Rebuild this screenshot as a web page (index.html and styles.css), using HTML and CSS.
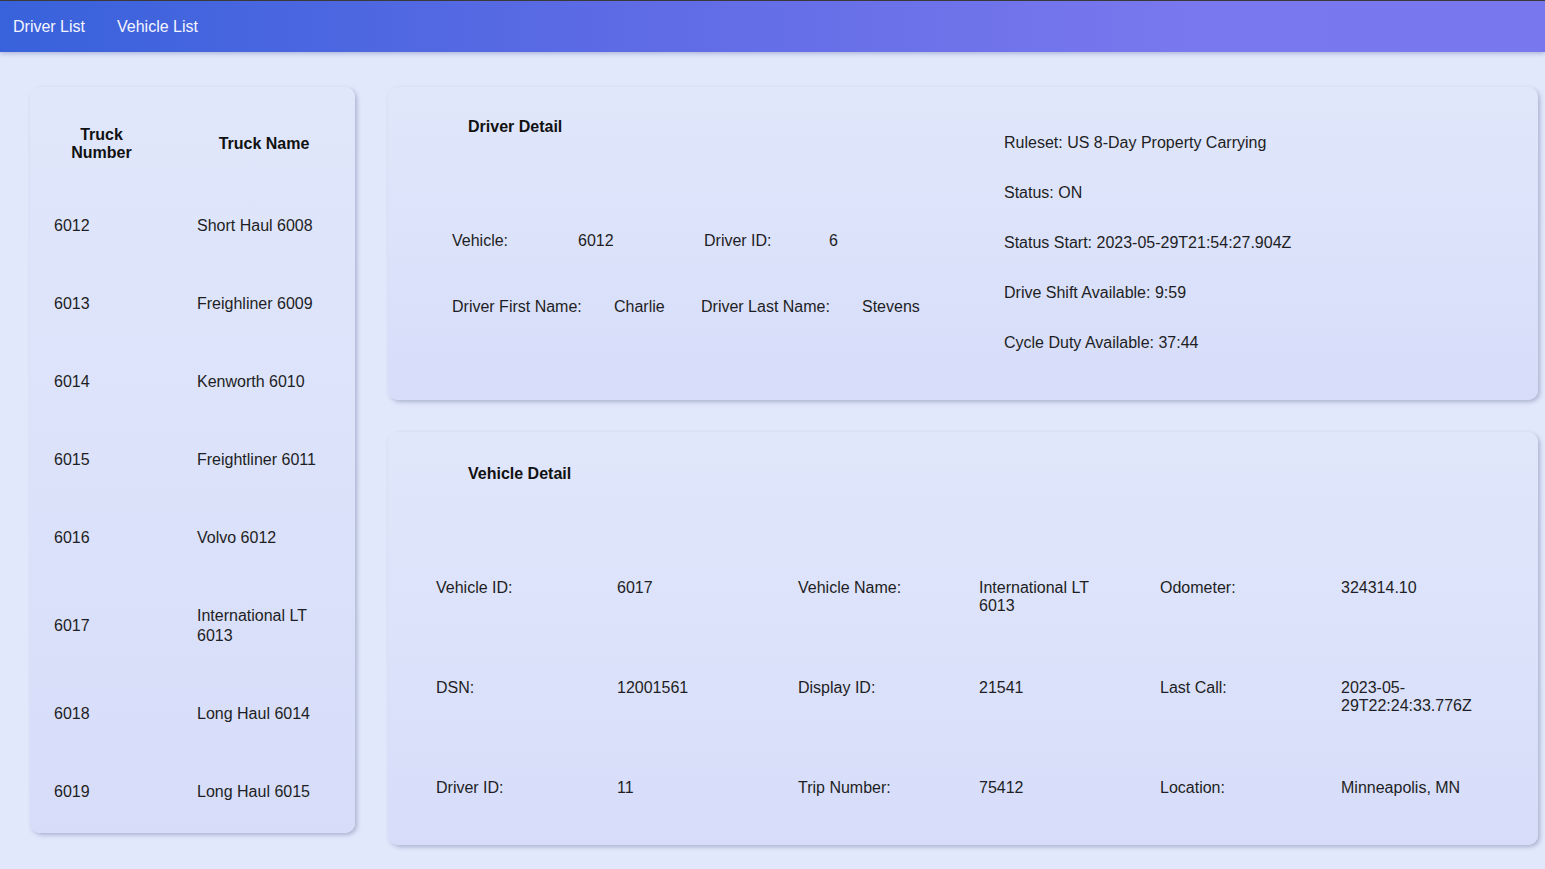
FILE: index.html
```html
<!DOCTYPE html>
<html>
<head>
    <title>Fleet Dashboard</title>
    <link rel="stylesheet" href="styles.css">
</head>
<body>
    <nav class="navbar">
        <a href="#" class="nav-link">Driver List</a>
        <a href="#" class="nav-link">Vehicle List</a>
    </nav>

    <main class="dashboard">
        <section class="card truck-card">
            <table class="truck-table">
                <colgroup>
                    <col class="col-number">
                    <col>
                </colgroup>
                <thead>
                    <tr>
                        <th>Truck Number</th>
                        <th>Truck Name</th>
                    </tr>
                </thead>
                <tbody>
                    <tr><td>6012</td><td>Short Haul 6008</td></tr>
                    <tr><td>6013</td><td>Freighliner 6009</td></tr>
                    <tr><td>6014</td><td>Kenworth 6010</td></tr>
                    <tr><td>6015</td><td>Freightliner 6011</td></tr>
                    <tr><td>6016</td><td>Volvo 6012</td></tr>
                    <tr><td>6017</td><td>International LT 6013</td></tr>
                    <tr><td>6018</td><td>Long Haul 6014</td></tr>
                    <tr><td>6019</td><td>Long Haul 6015</td></tr>
                </tbody>
            </table>
        </section>

        <div class="detail-column">
            <section class="card driver-card">
                <div class="driver-main">
                    <h3 class="card-title">Driver Detail</h3>
                    <div class="dd-row dd-ids">
                        <span>Vehicle:</span>
                        <span>6012</span>
                        <span>Driver ID:</span>
                        <span>6</span>
                    </div>
                    <div class="dd-row dd-names">
                        <span>Driver First Name:</span>
                        <span>Charlie</span>
                        <span>Driver Last Name:</span>
                        <span>Stevens</span>
                    </div>
                </div>
                <div class="driver-status">
                    <p>Ruleset: US 8-Day Property Carrying</p>
                    <p>Status: ON</p>
                    <p>Status Start: 2023-05-29T21:54:27.904Z</p>
                    <p>Drive Shift Available: 9:59</p>
                    <p>Cycle Duty Available: 37:44</p>
                </div>
            </section>

            <section class="card vehicle-card">
                <h3 class="card-title">Vehicle Detail</h3>
                <div class="vehicle-grid">
                    <div class="cell">Vehicle ID:</div>
                    <div class="cell">6017</div>
                    <div class="cell">Vehicle Name:</div>
                    <div class="cell">International LT 6013</div>
                    <div class="cell">Odometer:</div>
                    <div class="cell">324314.10</div>

                    <div class="cell">DSN:</div>
                    <div class="cell">12001561</div>
                    <div class="cell">Display ID:</div>
                    <div class="cell">21541</div>
                    <div class="cell">Last Call:</div>
                    <div class="cell">2023-05-29T22:24:33.776Z</div>

                    <div class="cell">Driver ID:</div>
                    <div class="cell">11</div>
                    <div class="cell">Trip Number:</div>
                    <div class="cell">75412</div>
                    <div class="cell">Location:</div>
                    <div class="cell">Minneapolis, MN</div>
                </div>
            </section>
        </div>
    </main>
</body>
</html>
```

FILE: styles.css
```css
body {
    margin: 0;
    font-family: "Liberation Sans", Arial, sans-serif;
    font-size: 16px;
    color: #1e1e24;
    background-color: #e1e8fc;
    min-height: 869px;
}

/* --- Barra de navegação --- */
.navbar {
    height: 51px;
    border-top: 1px solid #3a3a3a;
    background: linear-gradient(to right, #3862db 0%, #5d6be5 40%, #7a78ee 78%, #7877ed 100%);
    box-shadow: 0 2px 4px rgba(40, 50, 120, 0.25);
    display: flex;
    align-items: center;
    padding-left: 13px;
    gap: 32px;
}

.nav-link {
    color: #f4f5ff;
    text-decoration: none;
}

/* --- Layout principal --- */
.dashboard {
    display: flex;
    align-items: flex-start;
    gap: 33px;
    padding: 35px 7px 0 30px;
}

.card {
    background: linear-gradient(to bottom, #e0e7fb, #d7ddf9);
    border-radius: 10px;
    box-shadow: 2px 2px 4px rgba(70, 80, 130, 0.35);
}

.card-title {
    margin: 0;
    font-size: 16px;
    font-weight: bold;
    color: #111;
}

/* --- Tabela de caminhões --- */
.truck-card {
    width: 325px;
    flex-shrink: 0;
    padding: 15px 0 2px 0;
}

.truck-table {
    width: 100%;
    table-layout: fixed;
    border-collapse: collapse;
}

.col-number {
    width: 143px;
}

.truck-table th {
    padding: 24px 24px 25px;
    text-align: center;
    color: #111;
}

.truck-table td {
    padding: 29px 24px;
    line-height: 20px;
    text-align: left;
    vertical-align: middle;
}

/* --- Detalhes --- */
.detail-column {
    flex: 1;
    display: flex;
    flex-direction: column;
    gap: 32px;
}

.driver-card {
    display: flex;
    align-items: center;
    height: 313px;
}

.driver-main {
    flex: 0 0 616px;
    align-self: stretch;
    box-sizing: border-box;
    padding: 31px 0 0 64px;
}

.driver-main .card-title {
    margin: 0 0 96px 16px;
}

.dd-row {
    display: grid;
}

.dd-row + .dd-row {
    margin-top: 48px;
}

.dd-ids {
    grid-template-columns: 126px 126px 125px auto;
}

.dd-names {
    grid-template-columns: 162px 87px 161px auto;
}

.driver-status {
    display: flex;
    flex-direction: column;
    gap: 32px;
    margin-top: -2px;
}

.driver-status p {
    margin: 0;
}

.vehicle-card {
    padding: 33px 32px 16px 32px;
}

.vehicle-card .card-title {
    margin: 0 0 64px 48px;
}

.vehicle-grid {
    display: grid;
    grid-template-columns: repeat(6, 181px);
}

.vehicle-grid .cell {
    padding: 32px 16px;
}
```
